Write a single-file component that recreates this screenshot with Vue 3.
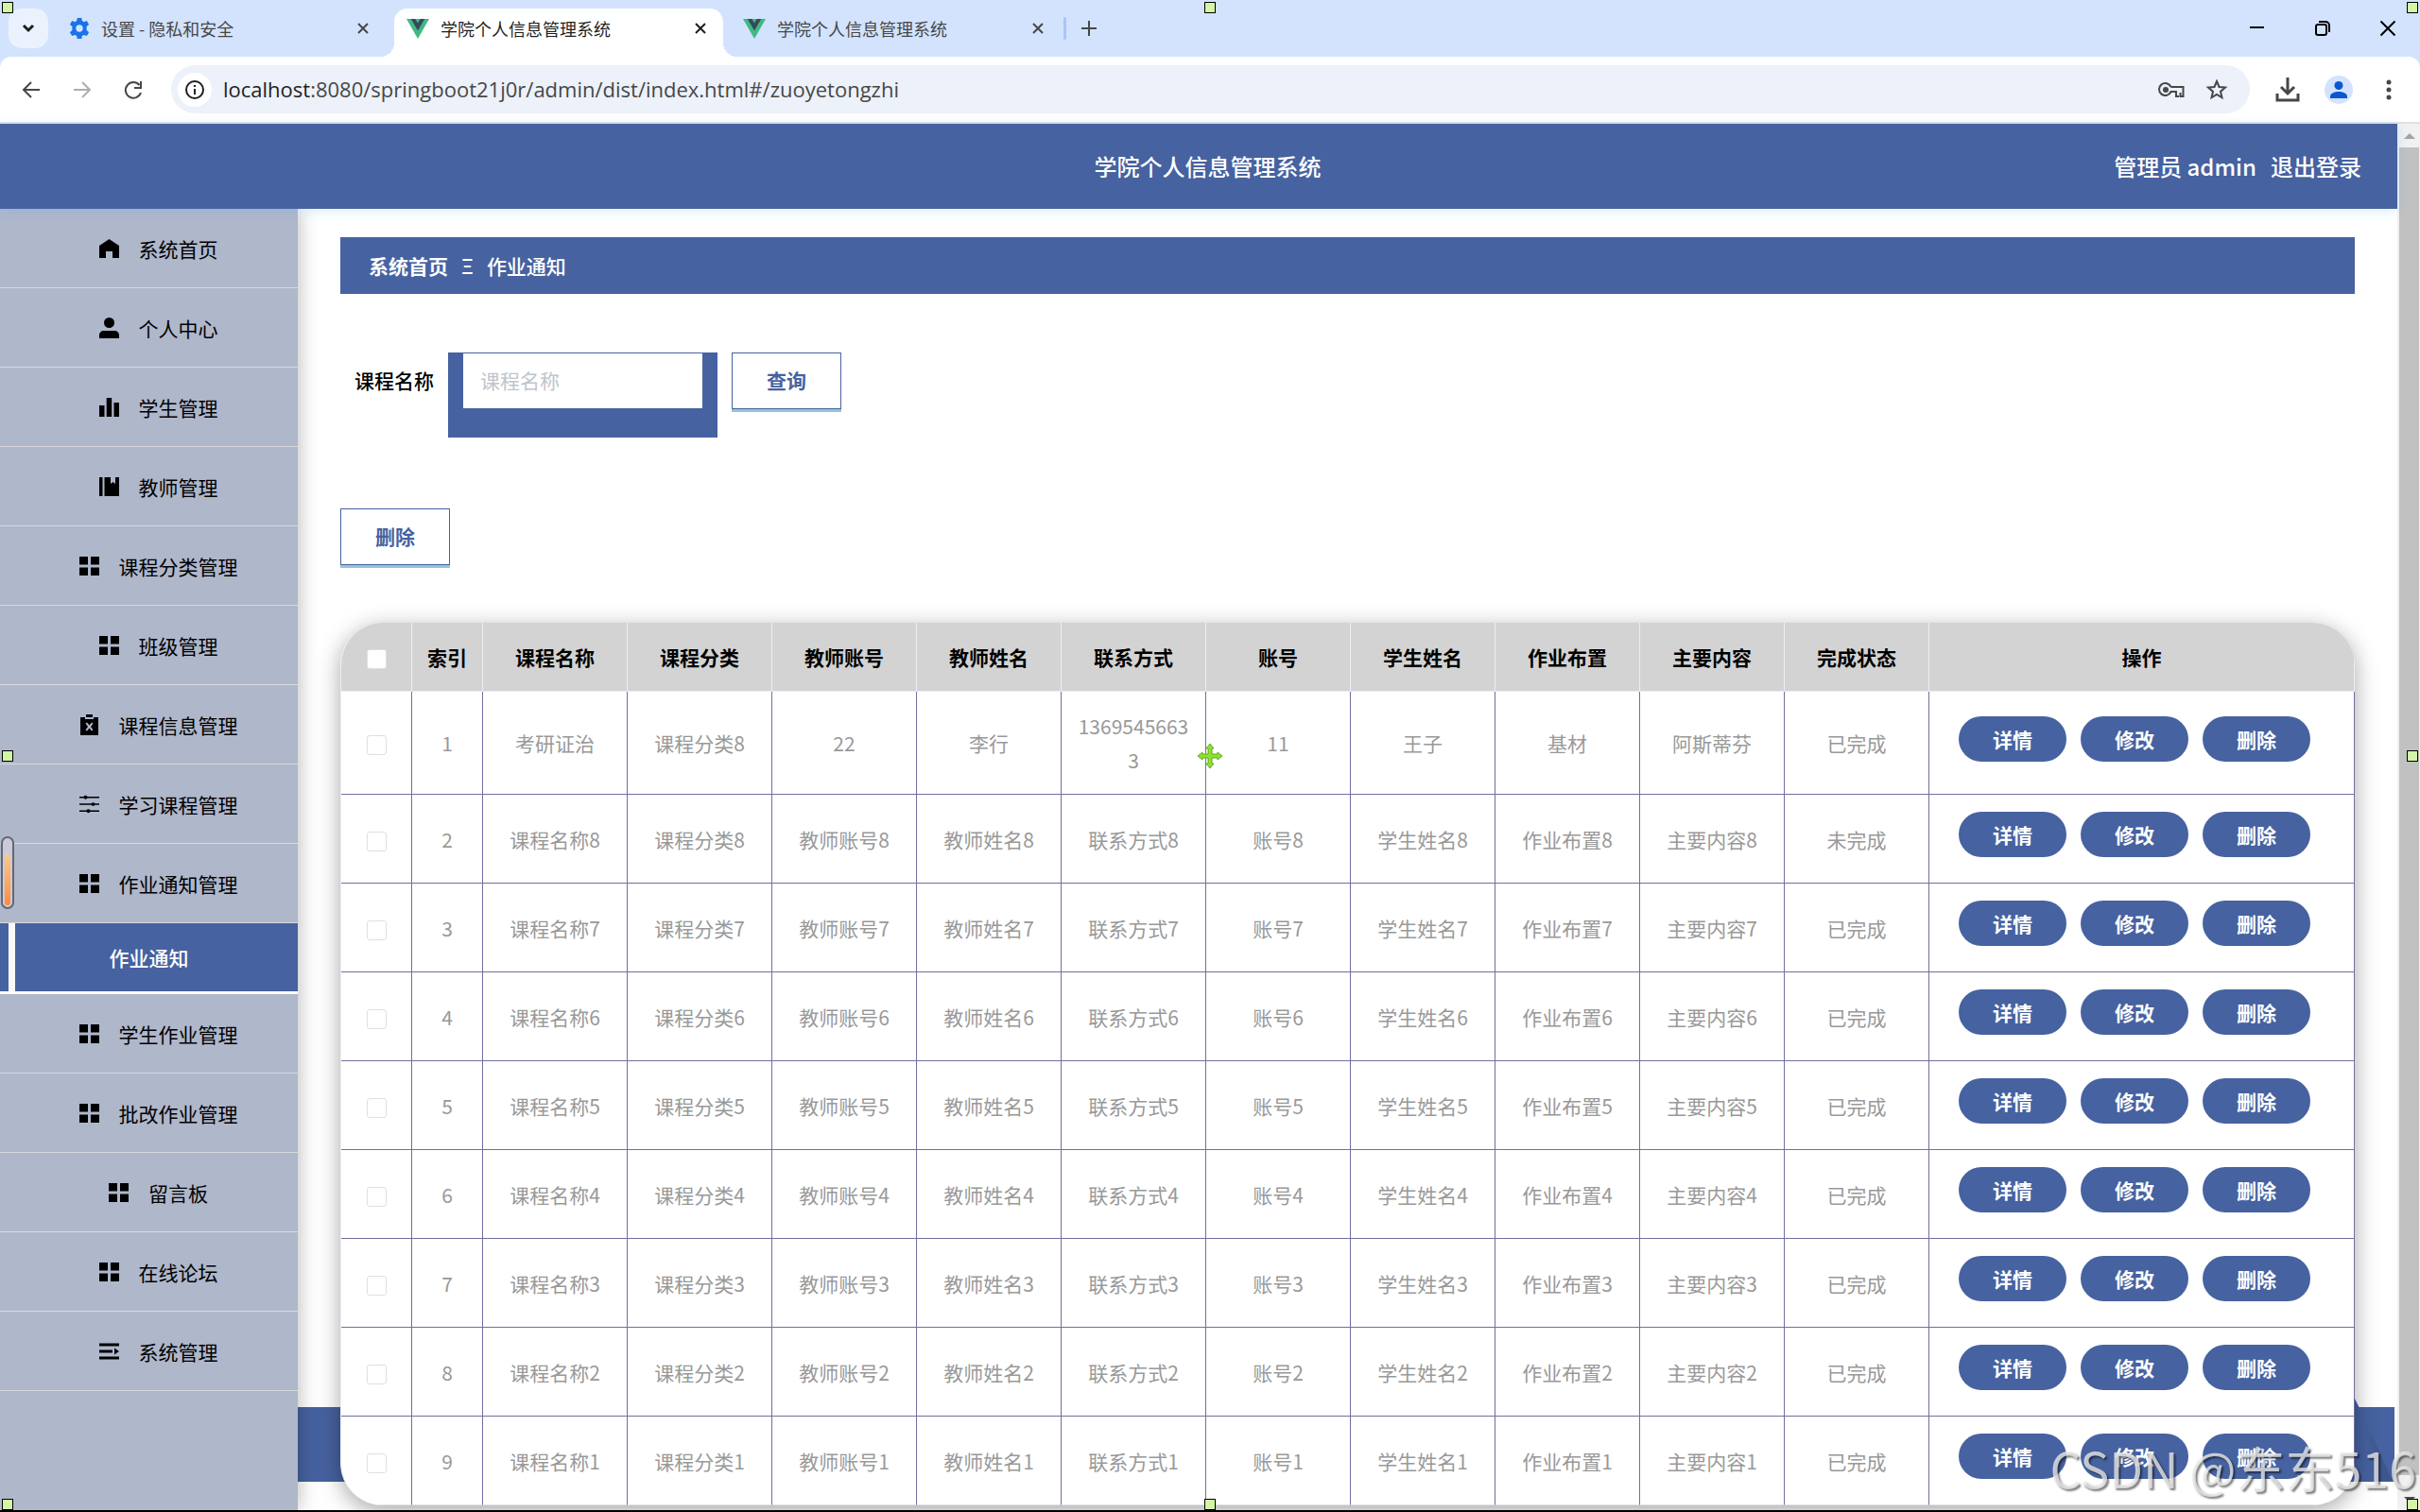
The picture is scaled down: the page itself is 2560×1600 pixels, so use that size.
<template>
  <div class="screen">
    <header class="browser">
      <div class="tabs">
        <button class="tab-search" aria-label="搜索标签页">
          <svg width="14" height="10" viewBox="0 0 14 10"><path d="M2 2l5 5 5-5" fill="none" stroke="#1f1f1f" stroke-width="3" /></svg>
        </button>
        <div v-for="(tab, i) in tabs" :key="i" class="tab" :class="{ active: tab.active, first: i === 0 }">
          <svg v-if="tab.icon === 'gear'" class="tab-icon gear" viewBox="0 0 24 24">
            <path
              fill="#1a73e8"
              fill-rule="evenodd"
              d="M9.500 0h5l.6 3.400 2.100 1.200 3.300-1.200 2.500 4.300-2.700 2.200v4.400l2.700 2.200-2.500 4.300-3.300-1.200-2.100 1.200-.6 3.200h-5l-.6-3.200-2.100-1.200-3.300 1.200L1 16.500l2.700-2.200V9.900L1 7.700l2.500-4.300 3.300 1.200 2.100-1.200zM12 8a4 4 0 1 0 0 8 4 4 0 0 0 0-8z"
            />
          </svg>
          <svg v-else class="tab-icon" viewBox="0 0 24 21">
            <path fill="#41b883" d="M0 0h24L12 21z" />
            <path fill="#35495e" d="M4.800 0h4.500L12 4.600 14.700 0h4.500L12 12.500z" />
          </svg>
          <span class="tab-title">{{ tab.title }}</span>
          <button class="tab-close" aria-label="关闭">
            <svg width="12" height="12" viewBox="0 0 12 12"><path d="M1 1l10 10M11 1L1 11" stroke="currentColor" stroke-width="2" /></svg>
          </button>
        </div>
        <span class="tab-sep"></span>
        <button class="tab-add" aria-label="新标签页">
          <svg width="16" height="16" viewBox="0 0 16 16"><path d="M8 0v16M0 8h16" stroke="#474747" stroke-width="2" /></svg>
        </button>
        <div class="window-btns">
          <button aria-label="最小化">
            <svg width="16" height="16" viewBox="0 0 16 16"><path d="M0 7h15" stroke="#000" stroke-width="2" /></svg>
          </button>
          <button aria-label="还原">
            <svg width="16" height="16" viewBox="0 0 16 16" fill="none" stroke="#000" stroke-width="2">
              <rect x="1" y="4" width="11" height="11" rx="2" />
              <path d="M4 1h7a4 4 0 0 1 4 4v7" />
            </svg>
          </button>
          <button aria-label="关闭窗口">
            <svg width="16" height="16" viewBox="0 0 16 16"><path d="M.5.5l15 15M15.500.5l-15 15" stroke="#000" stroke-width="2" /></svg>
          </button>
        </div>
      </div>
      <div class="toolbar">
        <button class="nav-btn" aria-label="后退">
          <svg width="20" height="20" viewBox="0 0 20 20"><path d="M19 10H3M10 2l-8 8 8 8" fill="none" stroke="#474747" stroke-width="2" /></svg>
        </button>
        <button class="nav-btn" aria-label="前进">
          <svg width="20" height="20" viewBox="0 0 20 20"><path d="M1 10h16M10 2l8 8-8 8" fill="none" stroke="#aeaeae" stroke-width="2" /></svg>
        </button>
        <button class="nav-btn" aria-label="刷新">
          <svg width="20" height="20" viewBox="0 0 20 20">
            <path d="M18 13a8.300 8.300 0 1 1-1.500-8" fill="none" stroke="#474747" stroke-width="2" />
            <path d="M18 1v7h-7" fill="none" stroke="#474747" stroke-width="2" />
          </svg>
        </button>
        <div class="address">
          <span class="site-info">
            <svg width="20" height="20" viewBox="0 0 20 20">
              <circle cx="10" cy="10" r="9" fill="none" stroke="#1f1f1f" stroke-width="2" />
              <path d="M10 9v6M10 5v2" stroke="#1f1f1f" stroke-width="2" />
            </svg>
          </span>
          <span class="url"><b>localhost</b>:8080/springboot21j0r/admin/dist/index.html#/zuoyetongzhi</span>
          <svg width="28" height="16" viewBox="0 0 28 16">
            <path
              d="M13.500 5h13v10h-3v-4M22 15h-3v-5h-5.500a6.500 6.500 0 1 1 0-5"
              fill="none"
              stroke="#474747"
              stroke-width="2"
            />
            <circle cx="8" cy="8" r="3" fill="#474747" />
          </svg>
          <svg width="24" height="24" viewBox="0 0 24 24">
            <path
              d="M12 3l2.500 6 6.500.600-5 4.300 1.500 6.400L12 17l-5.500 3.300L8 13.900 3 9.600l6.500-.6z"
              fill="none"
              stroke="#474747"
              stroke-width="2"
            />
          </svg>
        </div>
        <svg class="download" width="26" height="26" viewBox="0 0 26 26">
          <path d="M13 0v17M6 10l7 7 7-7M2 17v7h22v-7" fill="none" stroke="#474747" stroke-width="3" />
        </svg>
        <svg class="avatar" width="30" height="30" viewBox="0 0 30 30">
          <circle cx="15" cy="15" r="15" fill="#d3e3fd" />
          <circle cx="15" cy="10.500" r="4.500" fill="#0b57d0" />
          <path d="M6 24v-2c0-3.500 5-5 9-5s9 1.500 9 5v2z" fill="#0b57d0" />
        </svg>
        <svg class="more" width="6" height="22" viewBox="0 0 6 22" fill="#474747">
          <circle cx="3" cy="3" r="2.500" /><circle cx="3" cy="11" r="2.500" /><circle cx="3" cy="19" r="2.500" />
        </svg>
      </div>
    </header>

    <div class="viewport">
      <div class="page">
        <div class="page-header">
          <h1>学院个人信息管理系统</h1>
          <div class="user">
            <span>管理员 admin</span>
            <a href="#">退出登录</a>
          </div>
        </div>
        <div class="page-body">
          <nav class="sidebar">
            <template v-for="item in menus" :key="item.name">
              <a href="#" class="menu-item">
                <svg class="menu-icon" viewBox="0 0 21 20">
                  <path :d="icons[item.icon || 'grid']" fill="#000" fill-rule="evenodd" />
                </svg>
                <span>{{ item.name }}</span>
              </a>
              <a v-if="item.child" href="#" class="sub-item">{{ item.child }}</a>
            </template>
          </nav>

          <main class="main">
            <div class="footer-band">
              <svg width="42" height="88" viewBox="0 0 42 88">
                <defs>
                  <linearGradient id="fold" x1="0" y1="0.5" x2="1" y2="0.3">
                    <stop offset="0.300" stop-color="#4662a0" />
                    <stop offset="0.600" stop-color="#3e568e" />
                  </linearGradient>
                </defs>
                <path d="M0 0l4 8 36 79H0z" fill="url(#fold)" />
              </svg>
            </div>
            <div class="breadcrumb">
              <b>系统首页</b>
              <span>Ξ</span>
              <span>作业通知</span>
            </div>
            <form class="search" @submit.prevent>
              <label for="kecheng">课程名称</label>
              <input id="kecheng" v-model="keyword" type="text" placeholder="课程名称" />
              <button class="btn" type="submit">查询</button>
            </form>
            <div class="actions">
              <button class="btn">删除</button>
            </div>
            <div class="table-wrap">
              <table>
                <colgroup>
                  <col class="col-small" />
                  <col class="col-small" />
                  <col v-for="c in columns" :key="c" />
                  <col class="col-ops" />
                </colgroup>
                <thead>
                  <tr>
                    <th><input type="checkbox" aria-label="全选" /></th>
                    <th>索引</th>
                    <th v-for="c in columns" :key="c">{{ c }}</th>
                    <th>操作</th>
                  </tr>
                </thead>
                <tbody>
                  <tr v-for="(row, i) in rows" :key="i">
                    <td><input type="checkbox" :aria-label="'选择第' + (i + 1) + '行'" /></td>
                    <td>{{ i + 1 }}</td>
                    <td v-for="(cell, j) in row" :key="j">{{ cell }}</td>
                    <td>
                      <div class="ops">
                        <button>详情</button>
                        <button>修改</button>
                        <button>删除</button>
                      </div>
                    </td>
                  </tr>
                </tbody>
              </table>
            </div>
          </main>
        </div>
      </div>
      <div class="scrollbar">
        <svg width="12" height="6" viewBox="0 0 12 6"><path d="M6 0l6 6H0z" fill="#a3a3a3" /></svg>
        <div class="thumb"></div>
        <svg width="12" height="6" viewBox="0 0 12 6"><path d="M0 0h12L6 6z" fill="#505050" /></svg>
      </div>
    </div>

    <div class="gauge"><i></i></div>
    <div class="watermark">CSDN @东东516</div>

    <!-- 选框的控制点 -->
    <div class="handles">
      <template v-for="n in 9" :key="n">
        <svg v-if="n === 5" class="move" viewBox="0 0 28 28">
          <path
            d="M14 1l4 5h-2v6h6v-2l5 4-5 4v-2h-6v6h2l-4 5-4-5h2v-6H6v2l-5-4 5-4v2h6V6h-2z"
            fill="#8fe02f"
            stroke="#5fae1b"
          />
        </svg>
        <i v-else></i>
      </template>
    </div>
  </div>
</template>

<script setup>
import { ref } from 'vue';

const keyword = ref('');

const tabs = [
  { title: '设置 - 隐私和安全', icon: 'gear' },
  { title: '学院个人信息管理系统', icon: 'vue', active: true },
  { title: '学院个人信息管理系统', icon: 'vue' },
];

const icons = {
  grid: 'M0 0h9v8.500H0zM12 0h9v8.500h-9zM0 11.500h9V20H0zM12 11.500h9V20h-9z',
  home: 'M10.500 0L21 7v13h-7v-7H7v7H0V7z',
  user: 'M10.500-1a5.500 5.500 0 1 1 0 11 5.500 5.500 0 0 1 0-11zM0 21v-3c0-3 2-5 5-5h11c3 0 5 2 5 5v3z',
  bars: 'M0 8h5.500v12H0zM7.700 0h5.500v20H7.700zM15.500 5H21v15h-5.500z',
  book: 'M0 0h3.500v20H0zM5.500 0H12v7l2.500-2L17 7V0h4v20H5.500z',
  clip: 'M1 2h5v2h9V2h5v19H1zM7-1h7v3H7zM6.500 8.500L9 12l-2.500 3.500L8 16.500l2.500-3 2.500 3 1.500-1L12 12l2.500-3.500-1.500-1-2.500 3-2.500-3z',
  sliders:
    'M0 2h4.500a2.300 2.300 0 0 1 4 0H21v1.500H8.500a2.300 2.300 0 0 1-4 0H0zM0 9.300h12.500a2.300 2.300 0 0 1 4 0H21v1.500h-4.500a2.300 2.300 0 0 1-4 0H0zM0 16.500h7.500a2.300 2.300 0 0 1 4 0H21V18h-9.500a2.300 2.300 0 0 1-4 0H0z',
  indent: 'M0 1.500h21v3H0zM0 8.500h14v3H0zM0 15.500h21v3H0zM16 6.500l5 3.500-5 3.500z',
};

const menus = [
  { name: '系统首页', icon: 'home' },
  { name: '个人中心', icon: 'user' },
  { name: '学生管理', icon: 'bars' },
  { name: '教师管理', icon: 'book' },
  { name: '课程分类管理' },
  { name: '班级管理' },
  { name: '课程信息管理', icon: 'clip' },
  { name: '学习课程管理', icon: 'sliders' },
  { name: '作业通知管理', child: '作业通知' },
  { name: '学生作业管理' },
  { name: '批改作业管理' },
  { name: '留言板' },
  { name: '在线论坛' },
  { name: '系统管理', icon: 'indent' },
];

const columns = ['课程名称', '课程分类', '教师账号', '教师姓名', '联系方式', '账号', '学生姓名', '作业布置', '主要内容', '完成状态'];

const rows = [['考研证治', '课程分类8', '22', '李行', '13695456633', '11', '王子', '基材', '阿斯蒂芬', '已完成']];
for (let n = 8; n > 0; n--) {
  rows.push([...columns.slice(0, 9).map((c) => c + n), n === 8 ? '未完成' : '已完成']);
}
</script>

<style>
body {
  margin: 0;
}
</style>

<style scoped>
* {
  box-sizing: border-box;
}

.screen {
  position: relative;
  display: flex;
  flex-direction: column;
  min-height: 100vh;
  overflow: hidden;
  border-bottom: 2px solid #000;
  background: #fff;
  font-family: 'Noto Sans CJK SC', 'Noto Sans', sans-serif;
  font-size: 21px;
}

button {
  padding: 0;
  border: 0;
  background: none;
  font: inherit;
  color: inherit;
}

a {
  color: inherit;
  text-decoration: none;
}

svg {
  display: block;
  flex: none;
  overflow: visible;
}

/* 浏览器 */
.browser {
  background: #d3e3fd;
}

.tabs {
  display: flex;
  align-items: center;
  height: 60px;
  padding: 0 26px 0 9px;
}

.tab-search {
  display: grid;
  place-items: center;
  width: 42px;
  height: 42px;
  border-radius: 14px;
  background: #ebf2fe;
}

.tab {
  position: relative;
  display: flex;
  align-items: center;
  gap: 12px;
  width: 357px;
  height: 51px;
  margin-top: 9px;
  padding: 0 18px 9px 21px;
  color: #474747;
  font-size: 18px;
}

.tab.first {
  width: 366px;
  padding: 0 27px 9px 22px;
}

.tab.active {
  width: 348px;
  padding-left: 13px;
  border-radius: 14px 14px 0 0;
  background: #fff;
  color: #1f1f1f;
}

.tab.active::before,
.tab.active::after {
  content: '';
  position: absolute;
  bottom: 0;
  width: 15px;
  height: 15px;
}

.tab.active::before {
  right: 100%;
  background: radial-gradient(circle at 0 0, transparent 15px, #fff 15px);
}

.tab.active::after {
  left: 100%;
  background: radial-gradient(circle at 100% 0, transparent 15px, #fff 15px);
}

.tab-icon {
  width: 24px;
  height: 21px;
}

.tab-icon.gear {
  width: 22px;
  height: 22px;
}

.tab-title {
  flex: 1;
  white-space: nowrap;
}

.tab-sep {
  width: 3px;
  height: 24px;
  margin-left: 3px;
  border-radius: 2px;
  background: #a8c7fa;
}

.tab-add {
  margin-left: 16px;
}

.window-btns {
  display: flex;
  gap: 53px;
  margin-left: auto;
}

.toolbar {
  display: flex;
  align-items: center;
  height: 71px;
  padding: 0 30px 0 23px;
  border-bottom: 2px solid #dfe1e5;
  border-radius: 12px 12px 0 0;
  background: #fff;
}

.nav-btn {
  margin-right: 34px;
}

.address {
  display: flex;
  flex: 1;
  align-items: center;
  gap: 22px;
  height: 51px;
  margin-left: -4px;
  padding: 0 23px 0 7px;
  border-radius: 26px;
  background: #ecf1fa;
}

.site-info {
  display: grid;
  place-items: center;
  width: 36px;
  height: 36px;
  border-radius: 50%;
  background: #fff;
}

.url {
  flex: 1;
  margin-left: -10px;
  padding-bottom: 2px;
  color: #474747;
  font-family: 'Open Sans', 'Noto Sans', sans-serif;
  font-size: 22px;
}

.url b {
  color: #1f1f1f;
  font-weight: 400;
}

.download {
  margin-left: 27px;
}

.avatar {
  margin-left: 26px;
}

.more {
  margin-left: 35px;
}

/* 页面 */
.viewport {
  display: flex;
  flex: 1;
}

.page {
  display: flex;
  flex: 1;
  flex-direction: column;
  min-width: 0;
}

.page-header {
  position: relative;
  z-index: 3;
  display: grid;
  grid-template-columns: 1fr auto 1fr;
  align-items: center;
  height: 90px;
  padding: 0 38px 2px 57px;
  background: #4662a0;
  box-shadow: 0 2px 12px rgba(64, 158, 255, 0.2);
  color: #fff;
  font-size: 24px;
  font-weight: 500;
}

h1 {
  grid-column: 2;
  margin: 0;
  font-size: 24px;
  font-weight: 500;
}

.user {
  display: flex;
  justify-content: flex-end;
  gap: 15px;
}

.page-body {
  display: flex;
  flex: 1;
}

.sidebar {
  z-index: 2;
  flex: none;
  width: 315px;
  background: #afb7cb;
  box-shadow: 0 0 20px rgba(0, 0, 0, 0.3);
}

.menu-item {
  display: flex;
  align-items: center;
  justify-content: center;
  gap: 21px;
  height: 84px;
  padding-left: 20px;
  border-bottom: 1px solid #d9d9dc;
  color: #000;
}

.menu-icon {
  width: 21px;
  height: 20px;
}

.sub-item {
  position: relative;
  display: flex;
  align-items: center;
  justify-content: center;
  height: 75px;
  border-bottom: 3px solid #fff;
  background: linear-gradient(90deg, #4662a0 9px, #f9f9f9 9px, #f9f9f9 16px, #4662a0 16px);
  color: #fff;
  font-weight: 500;
}

.main {
  position: relative;
  z-index: 1;
  flex: 1;
  min-width: 0;
  padding: 30px 45px 5px;
}

.footer-band {
  position: absolute;
  right: 3px;
  bottom: 30px;
  left: 0;
  z-index: -1;
  display: flex;
  align-items: flex-end;
  justify-content: flex-end;
  height: 79px;
  background: #4662a0;
}

.breadcrumb {
  display: flex;
  align-items: center;
  gap: 14px;
  height: 60px;
  padding: 0 30px;
  background: #4662a0;
  color: #fff;
  font-weight: 500;
}

.breadcrumb b {
  font-weight: 700;
}

.search {
  display: flex;
  align-items: flex-start;
  gap: 15px;
  margin-top: 62px;
  padding-left: 15px;
}

.search label {
  line-height: 58px;
  color: #000;
  font-weight: 500;
}

.search input {
  width: 285px;
  height: 90px;
  padding: 0 18px 3px;
  border: solid #4662a0;
  border-width: 1px 16px 31px;
  outline: 0;
  background: #fff;
  color: #606266;
  font: inherit;
}

.search input::placeholder {
  color: #c0c4cc;
}

.btn {
  width: 116px;
  height: 60px;
  padding-bottom: 2px;
  border: 1px solid #4662a0;
  background: #fff;
  box-shadow: 0 3px 0 #94c5d5;
  color: #4662a0;
  font-weight: 700;
}

.actions {
  margin-top: 75px;
}

.actions .btn {
  display: block;
}

.table-wrap {
  margin-top: 61px;
  overflow: hidden;
  border-left: 1px solid #ebeef5;
  border-radius: 45px;
  background: #fff;
  box-shadow: 0 6px 24px rgba(0, 0, 0, 0.35);
}

table {
  width: 100%;
  border-collapse: separate;
  border-spacing: 0;
  table-layout: fixed;
  text-align: center;
}

.col-small {
  width: 75px;
}

.col-ops {
  width: 450px;
}

th,
td {
  padding: 18px 15px;
  border: solid #716f9f;
  border-width: 0 1px 1px 0;
  color: #999;
  line-height: 36px;
  word-break: break-all;
}

th {
  border-color: #ebeef5;
  background: #d3d3d3;
  color: #000;
  font-weight: 700;
}

tbody tr:last-child td {
  border-bottom-color: #dfe1ea;
}

td:last-child {
  padding: 18px 45px 18px 30px;
}

input[type='checkbox'] {
  display: block;
  width: 21px;
  height: 21px;
  margin: 5px auto 0;
  border: 1px solid #dcdfe6;
  border-radius: 3px;
  appearance: none;
  background: #fff;
}

.ops {
  display: flex;
  justify-content: center;
  gap: 15px;
  padding-bottom: 9px;
}

.ops button {
  width: 114px;
  height: 48px;
  border-radius: 24px;
  background: #4662a0;
  color: #fff;
  font-weight: 700;
  line-height: 46px;
}

.scrollbar {
  display: flex;
  flex: none;
  flex-direction: column;
  align-items: center;
  gap: 9px;
  width: 24px;
  padding: 10px 1px 8px 2px;
  background: #f1f1f1;
}

.thumb {
  flex: 1;
  width: 100%;
  margin-bottom: 14px;
  background: #c1c1c1;
}

/* 悬浮层 */
.gauge {
  position: absolute;
  top: 885px;
  left: 1px;
  z-index: 4;
  display: flex;
  align-items: flex-end;
  width: 14px;
  height: 77px;
  padding: 2px;
  border: 2px solid #65676f;
  border-radius: 7px;
  background: #c9ccd8;
}

.gauge i {
  width: 100%;
  height: 54px;
  border-radius: 3px;
  background: linear-gradient(#ffc88a, #ff8a3d);
}

.watermark {
  position: absolute;
  right: 4px;
  bottom: 20px;
  z-index: 4;
  color: rgba(232, 232, 232, 0.8);
  font-size: 52px;
  font-weight: 400;
  line-height: 50px;
  text-shadow: 2px 2px 2px rgba(0, 0, 0, 0.5);
  white-space: nowrap;
}

.handles {
  position: absolute;
  inset: 0;
  z-index: 5;
  display: grid;
  grid-template-columns: repeat(3, 12px);
  place-content: space-between;
  place-items: center;
  padding: 2px 2px 0;
  pointer-events: none;
}

.handles i {
  width: 12px;
  height: 12px;
  border: 1px solid #000;
  background: #d3f6a6;
}

.move {
  width: 28px;
  height: 28px;
  margin: -8px;
}
</style>
